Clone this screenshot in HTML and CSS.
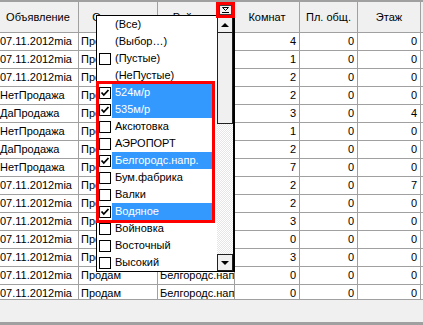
FILE: index.html
```html
<!DOCTYPE html>
<html lang="ru">
<head>
    <meta charset="UTF-8">
    <title>Фильтр</title>
    <link rel="stylesheet" href="styles.css">
</head>
<body>
    <div class="screen">
        <div class="grid">
            <div class="row head">
                <div class="cell">Объявление</div>
                <div class="cell">Операция</div>
                <div class="cell filt">
                    <span class="ht">Район</span>
                    <span class="fbtn">
                        <svg width="13" height="10" viewBox="0 0 13 10">
                            <rect x="0.5" y="0.5" width="12" height="9" fill="#f4f4f4" stroke="#404040"/>
                            <path d="M3.5 2.5 H9.5 L6.5 5.5 Z" fill="none" stroke="#000"/>
                            <path d="M3 7.5 H10" stroke="#000"/>
                        </svg>
                    </span>
                </div>
                <div class="cell">Комнат</div>
                <div class="cell">Пл. общ.</div>
                <div class="cell">Этаж</div>
                <div class="cell"></div>
            </div>
            <div class="row"><div class="cell">07.11.2012mia</div><div class="cell">Продам</div><div class="cell">Белгородс.напр.</div><div class="cell num">4</div><div class="cell num">0</div><div class="cell num">0</div><div class="cell"></div></div>
            <div class="row"><div class="cell">07.11.2012mia</div><div class="cell">Продам</div><div class="cell">Белгородс.напр.</div><div class="cell num">1</div><div class="cell num">0</div><div class="cell num">0</div><div class="cell"></div></div>
            <div class="row"><div class="cell">07.11.2012mia</div><div class="cell">Продам</div><div class="cell">Белгородс.напр.</div><div class="cell num">2</div><div class="cell num">0</div><div class="cell num">0</div><div class="cell"></div></div>
            <div class="row"><div class="cell">НетПродажа</div><div class="cell">Продам</div><div class="cell">Белгородс.напр.</div><div class="cell num">2</div><div class="cell num">0</div><div class="cell num">0</div><div class="cell"></div></div>
            <div class="row"><div class="cell">ДаПродажа</div><div class="cell">Продам</div><div class="cell">Белгородс.напр.</div><div class="cell num">3</div><div class="cell num">0</div><div class="cell num">4</div><div class="cell"></div></div>
            <div class="row"><div class="cell">НетПродажа</div><div class="cell">Продам</div><div class="cell">Белгородс.напр.</div><div class="cell num">1</div><div class="cell num">0</div><div class="cell num">0</div><div class="cell"></div></div>
            <div class="row"><div class="cell">ДаПродажа</div><div class="cell">Продам</div><div class="cell">Белгородс.напр.</div><div class="cell num">2</div><div class="cell num">0</div><div class="cell num">0</div><div class="cell"></div></div>
            <div class="row"><div class="cell">НетПродажа</div><div class="cell">Продам</div><div class="cell">Белгородс.напр.</div><div class="cell num">7</div><div class="cell num">0</div><div class="cell num">0</div><div class="cell"></div></div>
            <div class="row"><div class="cell">07.11.2012mia</div><div class="cell">Продам</div><div class="cell">Белгородс.напр.</div><div class="cell num">2</div><div class="cell num">0</div><div class="cell num">7</div><div class="cell"></div></div>
            <div class="row"><div class="cell">07.11.2012mia</div><div class="cell">Продам</div><div class="cell">Белгородс.напр.</div><div class="cell num">2</div><div class="cell num">0</div><div class="cell num">0</div><div class="cell"></div></div>
            <div class="row"><div class="cell">07.11.2012mia</div><div class="cell">Продам</div><div class="cell">Белгородс.напр.</div><div class="cell num">3</div><div class="cell num">0</div><div class="cell num">0</div><div class="cell"></div></div>
            <div class="row"><div class="cell">07.11.2012mia</div><div class="cell">Продам</div><div class="cell">Белгородс.напр.</div><div class="cell num">0</div><div class="cell num">0</div><div class="cell num">0</div><div class="cell"></div></div>
            <div class="row"><div class="cell">07.11.2012mia</div><div class="cell">Продам</div><div class="cell">Белгородс.напр.</div><div class="cell num">3</div><div class="cell num">0</div><div class="cell num">0</div><div class="cell"></div></div>
            <div class="row"><div class="cell">07.11.2012mia</div><div class="cell">Продам</div><div class="cell">Белгородс.напр.</div><div class="cell num">0</div><div class="cell num">0</div><div class="cell num">0</div><div class="cell"></div></div>
            <div class="row"><div class="cell">07.11.2012mia</div><div class="cell">Продам</div><div class="cell">Белгородс.напр.</div><div class="cell num">0</div><div class="cell num">0</div><div class="cell num">0</div><div class="cell"></div></div>
        </div>
        <div class="statusbar"></div>

        <!-- выпадающий список фильтра -->
        <div class="dropdown">
            <div class="list">
                <div class="item"><span class="slot"></span><span class="label">(Все)</span></div>
                <div class="item"><span class="slot"></span><span class="label">(Выбор…)</span></div>
                <div class="item"><span class="slot"><span class="chk"></span></span><span class="label">(Пустые)</span></div>
                <div class="item"><span class="slot"></span><span class="label">(НеПустые)</span></div>
                <div class="item sel"><span class="slot"><span class="chk on"><svg width="10" height="10" viewBox="0 0 10 10"><path d="M1.5 4.5 L3.8 7 L8.5 2" fill="none" stroke="#000" stroke-width="1.8"/></svg></span></span><span class="label">524м/р</span></div>
                <div class="item sel"><span class="slot"><span class="chk on"><svg width="10" height="10" viewBox="0 0 10 10"><path d="M1.5 4.5 L3.8 7 L8.5 2" fill="none" stroke="#000" stroke-width="1.8"/></svg></span></span><span class="label">535м/р</span></div>
                <div class="item"><span class="slot"><span class="chk"></span></span><span class="label">Аксютовка</span></div>
                <div class="item"><span class="slot"><span class="chk"></span></span><span class="label">АЭРОПОРТ</span></div>
                <div class="item sel"><span class="slot"><span class="chk on"><svg width="10" height="10" viewBox="0 0 10 10"><path d="M1.5 4.5 L3.8 7 L8.5 2" fill="none" stroke="#000" stroke-width="1.8"/></svg></span></span><span class="label">Белгородс.напр.</span></div>
                <div class="item"><span class="slot"><span class="chk"></span></span><span class="label">Бум.фабрика</span></div>
                <div class="item"><span class="slot"><span class="chk"></span></span><span class="label">Валки</span></div>
                <div class="item sel"><span class="slot"><span class="chk on"><svg width="10" height="10" viewBox="0 0 10 10"><path d="M1.5 4.5 L3.8 7 L8.5 2" fill="none" stroke="#000" stroke-width="1.8"/></svg></span></span><span class="label">Водяное</span></div>
                <div class="item"><span class="slot"><span class="chk"></span></span><span class="label">Войновка</span></div>
                <div class="item"><span class="slot"><span class="chk"></span></span><span class="label">Восточный</span></div>
                <div class="item"><span class="slot"><span class="chk"></span></span><span class="label">Высокий</span></div>
            </div>
            <div class="scroll">
                <div class="sb-btn up"></div>
                <div class="thumb"></div>
                <div class="track"></div>
                <div class="sb-btn down"></div>
            </div>
        </div>

        <!-- красные рамки -->
        <div class="mark mark-btn"></div>
        <div class="mark mark-list"></div>
    </div>
</body>
</html>
```

FILE: styles.css
```css
body {
    margin: 0;
    font-family: "Liberation Sans", Arial, sans-serif;
    font-size: 11px;
    color: #000;
    background-color: #f0f0f0;
}

.screen {
    position: relative;
    width: 423px;
    height: 325px;
    overflow: hidden;
}

/* Таблица */
.grid {
    height: 300px;
    box-sizing: border-box;
    border-top: 2px solid #a0a0a0;
    border-bottom: 1px solid #a0a0a0;
    background-color: #fff;
    overflow: hidden;
}

.row {
    display: grid;
    grid-template-columns: 81px 79px 77px 65px 58px 63px 80px;
    height: 18px;
    margin-left: -2px;
}

.cell {
    box-sizing: border-box;
    border-right: 1px solid #a0a0a0;
    border-bottom: 1px solid #a0a0a0;
    padding: 0 2px;
    line-height: 17px;
    white-space: nowrap;
    overflow: hidden;
}

.cell.num {
    text-align: right;
    padding-right: 3px;
}

.row.head {
    height: 31px;
    background-color: #f0f0f0;
}

.row.head .cell {
    line-height: 30px;
    text-align: center;
}

.cell.filt {
    display: flex;
    align-items: flex-start;
    padding: 0 2px 0 0;
}

.cell.filt .ht {
    flex: 1;
}

.fbtn {
    display: block;
    width: 13px;
    height: 10px;
    margin-top: 3px;
}

.fbtn svg {
    display: block;
}

.statusbar {
    height: 22px;
    background-color: #f0f0f0;
    border-bottom: 3px solid #a0a0a0;
}

/* Выпадающий список */
.dropdown {
    position: absolute;
    left: 96px;
    top: 15px;
    width: 139px;
    height: 257px;
    box-sizing: border-box;
    border: 1px solid #000;
    border-right-width: 2px;
    background-color: #fff;
    display: flex;
}

.list {
    width: 120px;
    display: flex;
    flex-direction: column;
}

.item {
    height: 17px;
    display: flex;
    align-items: center;
}

.slot {
    flex: none;
    width: 15px;
    padding-left: 2px;
    box-sizing: border-box;
    display: flex;
    align-items: center;
}

.chk {
    width: 12px;
    height: 12px;
    box-sizing: border-box;
    border: 1px solid #000;
    background-color: #fff;
}

.chk svg {
    display: block;
}

.label {
    flex: 1;
    height: 17px;
    line-height: 17px;
    padding-left: 3px;
    margin-right: 3px;
    white-space: nowrap;
}

.item.sel .label {
    background-color: #3399ff;
    color: #fff;
}

.scroll {
    width: 16px;
    display: flex;
    flex-direction: column;
}

.sb-btn {
    height: 17px;
    flex: none;
    box-sizing: border-box;
    border: 1px solid #202020;
    background-color: #f0f0f0;
    display: flex;
    align-items: center;
    justify-content: center;
}

.sb-btn::before {
    content: "";
    border-left: 4px solid transparent;
    border-right: 4px solid transparent;
}

.sb-btn.up::before {
    border-bottom: 4px solid #000;
}

.sb-btn.down::before {
    border-top: 4px solid #000;
}

.thumb {
    height: 91px;
    flex: none;
    box-sizing: border-box;
    border: 1px solid #202020;
    border-top: none;
    background-color: #f0f0f0;
}

.track {
    flex: 1;
    background-image: conic-gradient(#fff 25%, #e6e6e6 0 50%, #fff 0 75%, #e6e6e6 0);
    background-size: 2px 2px;
}

/* Красные рамки поверх */
.mark {
    position: absolute;
    box-sizing: border-box;
    border: 3px solid #ff0000;
}

.mark-btn {
    left: 216px;
    top: 2px;
    width: 19px;
    height: 16px;
}

.mark-list {
    left: 96px;
    top: 81px;
    width: 119px;
    height: 142px;
}
```
